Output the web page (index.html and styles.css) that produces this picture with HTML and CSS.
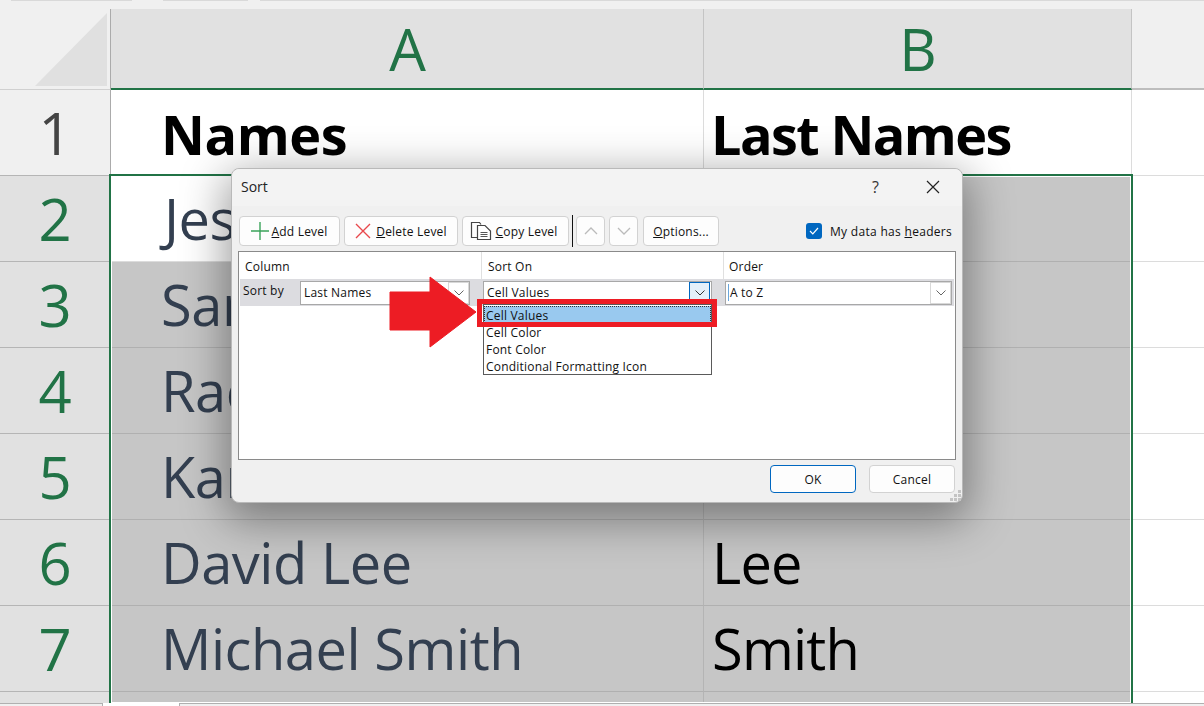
FILE: index.html
```html
<!DOCTYPE html>
<html lang="en">
<head>
<meta charset="utf-8">
<title>Sort</title>
<link rel="stylesheet" href="styles.css">
</head>
<body>
<div class="page">
  <div class="topstrip"><span class="tab t1"></span><span class="tab t2"></span><span class="tab t3"></span></div>
  <div class="sheet">
    <div class="corner"><svg class="corner-tri" width="107" height="80" viewBox="0 0 107 80"><polygon points="35,77 107,4 107,77" fill="#e0e0e0"/></svg></div>
    <div class="colhead">A</div>
    <div class="colhead">B</div>
    <div class="colhead blank"></div>

    <div class="rowhead plain">1</div>
    <div class="cell head first">Names</div>
    <div class="cell head second">Last Names</div>
    <div class="cell empty"></div>

    <div class="rowhead">2</div>
    <div class="cell name active">Jes</div>
    <div class="cell sel"></div>
    <div class="cell empty"></div>

    <div class="rowhead">3</div>
    <div class="cell name sel">Sar</div>
    <div class="cell sel"></div>
    <div class="cell empty"></div>

    <div class="rowhead">4</div>
    <div class="cell name sel">Rac</div>
    <div class="cell sel"></div>
    <div class="cell empty"></div>

    <div class="rowhead">5</div>
    <div class="cell name sel">Kar</div>
    <div class="cell sel"></div>
    <div class="cell empty"></div>

    <div class="rowhead">6</div>
    <div class="cell name sel">David Lee</div>
    <div class="cell last sel">Lee</div>
    <div class="cell empty"></div>

    <div class="rowhead">7</div>
    <div class="cell name sel">Michael Smith</div>
    <div class="cell last sel">Smith</div>
    <div class="cell empty"></div>

    <div class="rowhead"></div>
    <div class="cell sel"></div>
    <div class="cell sel"></div>
    <div class="cell empty"></div>
  </div>
  <div class="bottomstrip"><span class="sheettab"></span></div>

  <div class="selection"></div>

  <section class="dialog">
    <header class="titlebar">
      <span class="title">Sort</span>
      <span class="help">?</span>
      <svg class="close" width="14" height="14" viewBox="0 0 14 14"><path d="M1 1l12 12M13 1L1 13" stroke="#222" stroke-width="1.2" fill="none"/></svg>
    </header>
    <div class="toolbar">
      <button class="btn add"><svg width="20" height="20" viewBox="0 0 20 20"><path d="M10 1v18M1 10h18" stroke="#3aa35a" stroke-width="1.4" fill="none"/></svg><span><u>A</u>dd Level</span></button>
      <button class="btn del"><svg width="16" height="16" viewBox="0 0 16 16"><path d="M1 1l14 14M15 1L1 15" stroke="#e8484c" stroke-width="1.4" fill="none"/></svg><span><u>D</u>elete Level</span></button>
      <button class="btn copy"><svg width="22" height="20" viewBox="0 0 22 20"><path d="M7.500 16.500H1.500V1.500H9.500L11 3.500" stroke="#444" stroke-width="1.200" fill="none"/><path d="M7.500 4.500H15L20.500 10V18.500H7.500Z" stroke="#444" stroke-width="1.200" fill="#fff"/><path d="M10.500 11.500h7M10.500 13.500h7M10.500 15.500h7" stroke="#555" stroke-width="1" fill="none"/></svg><span><u>C</u>opy Level</span></button>
      <span class="vsep"></span>
      <button class="btn arrow up"><svg width="14" height="8" viewBox="0 0 14 8"><path d="M1 7l6-6 6 6" stroke="#bbb" stroke-width="1.300" fill="none"/></svg></button>
      <button class="btn arrow down"><svg width="14" height="8" viewBox="0 0 14 8"><path d="M1 1l6 6 6-6" stroke="#bbb" stroke-width="1.300" fill="none"/></svg></button>
      <button class="btn options"><span><u>O</u>ptions...</span></button>
      <label class="headers"><span class="check"><svg width="10" height="8" viewBox="0 0 10 8"><path d="M1 4l2.800 2.800L9 1" stroke="#fff" stroke-width="1.200" fill="none"/></svg></span><span>My data has <u>h</u>eaders</span></label>
    </div>
    <div class="list">
      <div class="listhead">
        <span class="hcol c1">Column</span>
        <span class="hcol c2">Sort On</span>
        <span class="hcol c3">Order</span>
      </div>
      <div class="listrow">
        <div class="lc c1"><span class="sortby">Sort by</span><div class="combo w1"><span class="val">Last Names</span><span class="dd"><svg width="10" height="6" viewBox="0 0 10 6"><path d="M.5.500l4.500 4.500L9.500.500" stroke="#666" fill="none"/></svg></span></div></div>
        <div class="lc c2"><div class="combo w2"><span class="val">Cell Values</span><span class="dd on"><svg width="10" height="6" viewBox="0 0 10 6"><path d="M.5.500l4.500 4.500L9.500.500" stroke="#333" fill="none"/></svg></span></div></div>
        <div class="lc c3"><div class="combo w3"><span class="val caret">A to Z</span><span class="dd"><svg width="10" height="6" viewBox="0 0 10 6"><path d="M.5.500l4.500 4.500L9.500.500" stroke="#666" fill="none"/></svg></span></div></div>
      </div>
    </div>
    <footer class="actions">
      <button class="btn wide primary">OK</button>
      <button class="btn wide">Cancel</button>
    </footer>
    <svg class="grip" width="12" height="12" viewBox="0 0 12 12"><path d="M8 0h3v3H8zM4 4h3v3H4zM8 4h3v3H8zM0 8h3v3H0zM4 8h3v3H4zM8 8h3v3H8z" fill="#c4c4c4"/></svg>
  </section>

  <ul class="dropdown">
    <li class="picked">Cell Values</li>
    <li>Cell Color</li>
    <li>Font Color</li>
    <li>Conditional Formatting Icon</li>
  </ul>
  <div class="redbox"></div>
  <svg class="redarrow" width="88" height="72" viewBox="0 0 88 72"><polygon points="1,16 41,16 41,1 87,36 41,71 41,54 1,54" fill="#ed1c24" stroke="#ed1c24" stroke-width="1" stroke-linejoin="round"/></svg>
</div>
</body>
</html>
```
FILE: styles.css
```css
* { box-sizing: border-box; }
html, body { margin: 0; padding: 0; }
body { font-family: "Open Sans", "Noto Sans", sans-serif; background: #fff; }
.page { position: relative; width: 1204px; height: 706px; overflow: hidden; }

.topstrip { height: 9px; background: #f0f0f0; display: flex; position: relative; }
.tab { height: 1px; background: #d9d9d9; }
.t1 { width: 121px; margin-left: 11px; }
.t2 { width: 85px; margin-left: 31px; }
.t3 { flex: 1; margin-left: 12px; }

.sheet {
  display: grid;
  grid-template-columns: 111px 593px 428px 72px;
  grid-template-rows: 81px repeat(7, 86px) 12px;
  height: 695px;
}
.corner { background: #f0f0f0; border-right: 1px solid #ababab; border-bottom: 1px solid #d0d0d0; }
.corner-tri { display: block; }
.colhead {
  background: #e1e1e1; color: #217346; border-right: 1px solid #c4c4c4; border-bottom: 2px solid #217346;
  font-size: 58px; line-height: 80px; text-align: center; padding-left: 1px;
}
.colhead.blank { background: #f0f0f0; border-right: 0; border-bottom: 2px solid #bdbdbd; }
.rowhead {
  background: #e1e1e1; color: #217346; border-right: 1px solid #ababab; border-bottom: 1px solid #b5b5b5;
  font-size: 58px; line-height: 86px; text-align: center;
}
.rowhead.plain { background: #f0f0f0; color: #444; }
.cell { background: #fff; border-right: 1px solid #dcdcdc; border-bottom: 1px solid #dcdcdc; line-height: 85px; overflow: hidden; white-space: nowrap; }
.cell.head { font-size: 54px; font-weight: 700; color: #000; letter-spacing: -1px; line-height: 88px; }
.cell.first { padding-left: 50px; letter-spacing: -.4px; }
.cell.second { padding-left: 7px; letter-spacing: -1.6px; }
.cell.name { font-size: 56px; color: #333f50; padding-left: 50px; letter-spacing: -.45px; }
.cell.active { padding-left: 53px; }
.cell.last { font-size: 56px; color: #000; padding-left: 8px; letter-spacing: -.8px; }
.cell.sel { background: #c6c6c6; border-right-color: #b4b4b4; border-bottom-color: #b0b0b0; }
.cell.empty { border-right: 0; }

.bottomstrip { position: absolute; left: 0; right: 0; bottom: 0; height: 3px; background: #f0f0f0; border-top: 1px solid #b0b0b0; }
.sheettab { position: absolute; left: 102px; top: -1px; width: 78px; height: 3px; background: #fff; border-left: 1px solid #b0b0b0; border-right: 1px solid #b0b0b0; }

.selection { position: absolute; left: 109px; top: 174px; width: 1024px; height: 529px; border: 2px solid #217346; border-bottom: 0; box-shadow: inset 0 0 0 1px #fff; }

.dialog {
  position: absolute; left: 231px; top: 168px; width: 732px; height: 335px;
  background: #f0f0f0; border: 1px solid #b9b9b9; border-radius: 8px;
  box-shadow: 0 12px 44px 6px rgba(0,0,0,.38);
  display: flex; flex-direction: column; font-size: 12px; color: #111; letter-spacing: .2px;
}
.titlebar { height: 37px; display: flex; align-items: center; padding: 0 22px 2px 9px; background: #f3f3f3; border-radius: 8px 8px 0 0; }
.title { font-size: 14px; color: #222; flex: 1; letter-spacing: 0; }
.help { font-size: 16px; color: #333; margin-right: 47px; }
.toolbar { display: flex; align-items: center; height: 41px; margin-top: 1px; padding: 8px 0 1px 7px; position: relative; }
.btn {
  height: 30px; background: #fdfdfd; border: 1px solid #d2d2d2; border-radius: 4px;
  font: inherit; letter-spacing: inherit; color: #111; display: inline-flex; align-items: center; justify-content: center; padding: 0; gap: 3px;
}
.add { width: 101px; padding-right: 2px; gap: 2px; }
.del { width: 114px; margin-left: 4px; gap: 5px; }
.copy { width: 107px; margin-left: 4px; padding-right: 3px; }
.vsep { width: 1.5px; height: 32px; background: #111; margin: 0 3px 0 2.5px; }
.arrow { width: 29px; margin-right: 4px; }
.options { width: 76px; margin-left: 1px; }
.headers { display: flex; align-items: center; margin-left: 87px; gap: 8px; white-space: nowrap; letter-spacing: .3px; }
.check { width: 16px; height: 16px; background: #0067c0; border-radius: 3px; display: flex; align-items: center; justify-content: center; }
.list { margin: 3px 0 0 6px; width: 718px; height: 209px; background: #fff; border: 1px solid #8a8a8a; display: flex; flex-direction: column; }
.listhead { display: grid; grid-template-columns: 243px 242px 1fr; height: 27px; }
.hcol { padding: 6px 0 0 6px; border-right: 1px solid #e0e0e0; }
.hcol.c3 { border-right: 0; padding-left: 5px; }
.listrow { display: grid; grid-template-columns: 243px 242px 1fr; height: 27px; margin: 0 1px; background: #dcdce0; }
.lc { display: flex; align-items: flex-start; padding-top: 2px; }
.lc.c1 { width: 241px; }
.sortby { width: 60px; padding: 1px 0 0 3px; }
.lc.c2 { padding-left: 1px; margin-left: -1px; }
.lc.c3 { padding-left: 0; }
.combo { height: 24px; background: #fff; border: 1px solid #a8a8a8; display: flex; align-items: center; justify-content: space-between; padding-left: 3px; }
.val { margin-bottom: 2px; }
.w1 { width: 170px; }
.w2 { width: 229px; }
.w3 { width: 227px; }
.caret { border-left: 1px solid #6aa6dc; padding-left: 1px; margin-left: -1px; }
.dd { width: 21px; height: 22px; border: 1px solid #d8d8d8; display: flex; align-items: center; justify-content: center; }
.dd.on { border-color: #0067c0; background: #e4f0fa; margin-right: 1px; }
.actions { display: flex; justify-content: flex-end; gap: 13px; padding: 5px 7px 0 0; }
.wide { width: 86px; height: 28px; }
.primary { border: 1px solid #0067c0; }
.grip { position: absolute; right: 0; bottom: 0; }

.dropdown {
  position: absolute; left: 483px; top: 304px; width: 229px; height: 71px; margin: 0; padding: 1px 0 0; list-style: none;
  background: #fff; border: 1px solid #5a5a5a; font-size: 12px; color: #111; letter-spacing: .2px;
}
.dropdown li { height: 17px; line-height: 19px; padding-left: 2px; white-space: nowrap; }
.dropdown li.picked { background: #99c9ef; outline: 1px dotted #333; outline-offset: -1px; }
.redbox { position: absolute; left: 477px; top: 299px; width: 240px; height: 28px; border: 5px solid #ed1c24; }
.redarrow { position: absolute; left: 389px; top: 276px; }
```
